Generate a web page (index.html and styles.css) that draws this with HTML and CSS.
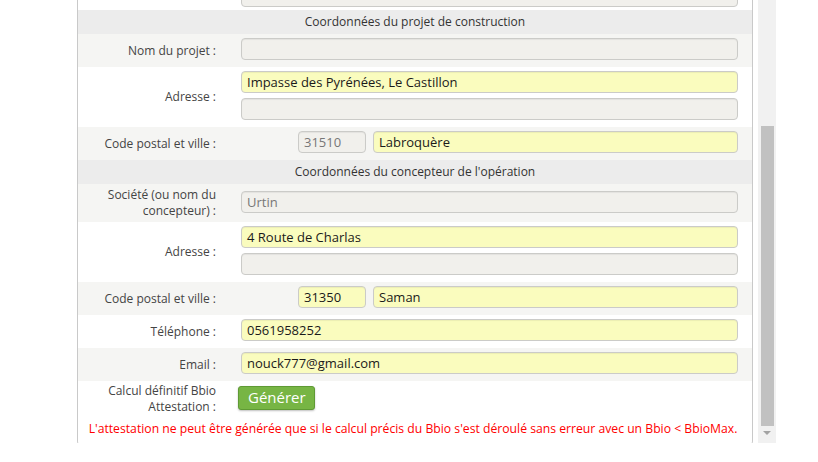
FILE: index.html
```html
<!DOCTYPE html>
<html lang="fr">
  <head>
    <meta charset="UTF-8" />
    <meta name="viewport" content="width=device-width, initial-scale=1">
    <title>Attestation Bbio</title>
    <link rel="stylesheet" href="styles.css">
  </head>
  <body>
    <div class="frame">
      <div class="content">
        <div class="panel">
          <div class="row cut">
            <div class="lbl"></div>
            <div class="fld">
              <div class="input gray select"><span class="sel-text">type de projet</span><span class="sel-arrow">▾</span></div>
            </div>
          </div>

          <div class="sec">Coordonnées du projet de construction</div>
          <div class="row alt">
            <div class="lbl">Nom du projet :</div>
            <div class="fld"><div class="input gray"></div></div>
          </div>
          <div class="row">
            <div class="lbl">Adresse :</div>
            <div class="fld">
              <div class="input yellow">Impasse des Pyrénées, Le Castillon</div>
              <div class="input gray"></div>
            </div>
          </div>
          <div class="row alt">
            <div class="lbl">Code postal et ville :</div>
            <div class="fld line">
              <div class="cp"><div class="input gray muted">31510</div></div>
              <div class="input yellow city">Labroquère</div>
            </div>
          </div>

          <div class="sec">Coordonnées du concepteur de l'opération</div>
          <div class="row alt">
            <div class="lbl">Société (ou nom du concepteur) :</div>
            <div class="fld"><div class="input gray muted">Urtin</div></div>
          </div>
          <div class="row">
            <div class="lbl">Adresse :</div>
            <div class="fld">
              <div class="input yellow">4 Route de Charlas</div>
              <div class="input gray"></div>
            </div>
          </div>
          <div class="row alt">
            <div class="lbl">Code postal et ville :</div>
            <div class="fld line">
              <div class="cp"><div class="input yellow">31350</div></div>
              <div class="input yellow city">Saman</div>
            </div>
          </div>
          <div class="row">
            <div class="lbl">Téléphone :</div>
            <div class="fld"><div class="input yellow">0561958252</div></div>
          </div>
          <div class="row alt">
            <div class="lbl">Email :</div>
            <div class="fld"><div class="input yellow">nouck777@gmail.com</div></div>
          </div>
          <div class="row gen">
            <div class="lbl">Calcul définitif Bbio Attestation :</div>
            <div class="fld"><button type="button" class="btn">Générer</button></div>
          </div>
          <p class="error">L'attestation ne peut être générée que si le calcul précis du Bbio s'est déroulé sans erreur avec un Bbio &lt; BbioMax.</p>
        </div>
      </div>
      <div class="scrollbar">
        <div class="thumb"></div>
        <div class="arrow"></div>
      </div>
    </div>
  </body>
</html>
```

FILE: styles.css
```css
html, body {
  margin: 0;
  padding: 0;
  background: #fff;
  overflow: hidden;
}
body {
  font-family: 'Open Sans', 'Noto Sans', sans-serif;
  font-size: 12px;
  color: #444;
}
.frame {
  display: flex;
  width: 776px;
  height: 443px;
}
.content {
  flex: 1;
  padding: 0 5px 0 77px;
}
.scrollbar {
  width: 18px;
  background: #f1f1f1;
  position: relative;
}
.thumb {
  position: absolute;
  left: 3px;
  right: 2px;
  top: 126px;
  height: 300px;
  background: #c1c1c1;
}
.arrow {
  position: absolute;
  left: 5px;
  top: 431px;
  border-left: 4px solid transparent;
  border-right: 4px solid transparent;
  border-top: 4px solid #a3a3a3;
}
.panel {
  border: 1px solid #c9c9c9;
  border-top: none;
  border-radius: 0 0 5px 5px;
  background: #fff;
}
.row {
  display: flex;
  background: #fff;
}
.row.alt {
  background: #f5f5f3;
}
.lbl {
  width: 138px;
  padding: 3px 12px 3px 0;
  display: flex;
  align-items: center;
  justify-content: flex-end;
  text-align: right;
  line-height: 16px;
}
.fld {
  flex: 1;
  padding: 4px 14px 7px 13px;
  display: flex;
  flex-direction: column;
  justify-content: center;
  gap: 5px;
}
.fld.line {
  flex-direction: row;
  align-items: center;
  gap: 7px;
}
.cp {
  width: 125px;
  display: flex;
  justify-content: flex-end;
}
.cp .input {
  width: 68px;
}
.city {
  flex: 1;
}
.input {
  box-sizing: border-box;
  height: 22px;
  line-height: 20px;
  padding: 0 5px;
  border: 1px solid #cbcbc8;
  border-radius: 4px;
  font-size: 13px;
  color: #1a1a1a;
  box-shadow: inset 0 1px 1px rgba(0,0,0,0.06);
  white-space: nowrap;
  overflow: hidden;
}
.input.gray {
  background: #f1f0ec;
}
.input.yellow {
  background: #fafcbe;
}
.input.muted {
  color: #777;
}
.cut {
  height: 10px;
  overflow: hidden;
}
.cut .fld {
  justify-content: flex-end;
  padding-top: 0;
  padding-bottom: 3px;
}
.cut .input {
  flex-shrink: 0;
  position: relative;
}
.sel-text {
  position: absolute;
  right: 36px;
  top: -11px;
  color: #555;
}
.sel-arrow {
  position: absolute;
  right: 8px;
  top: -11px;
  font-size: 10px;
  color: #888;
}
.sec {
  height: 24px;
  line-height: 24px;
  text-align: center;
  background: #ececec;
  color: #333;
  font-size: 12px;
}
.gen .lbl {
  padding-top: 2px;
}
.gen .fld {
  padding: 3px 12px 7px 10px;
  align-items: flex-start;
}
.btn {
  height: 24px;
  padding: 0 8px 0 9px;
  background: #77b544;
  border: 1px solid #5f9a34;
  border-radius: 3px;
  color: #fff;
  font-family: 'Open Sans', 'Noto Sans', sans-serif;
  font-size: 15px;
  line-height: 21px;
  box-shadow: 0 1px 2px rgba(0,0,0,0.25);
  cursor: pointer;
}
.error {
  margin: 0;
  padding: 3px 4px 8px 0;
  text-align: center;
  color: #f00;
  font-size: 12.2px;
  line-height: 16px;
}
```
